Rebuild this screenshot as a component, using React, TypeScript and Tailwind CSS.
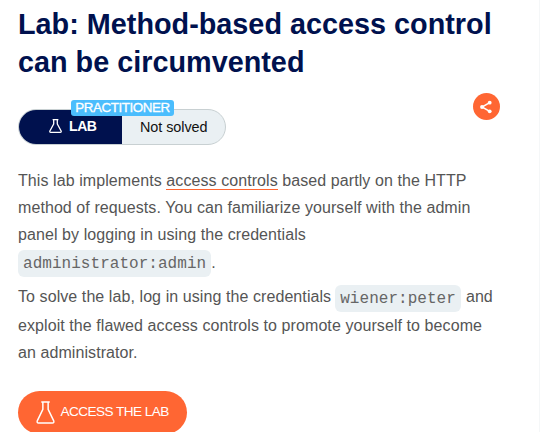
function Flask({ className, stroke }: { className: string; stroke: number }) {
  return (
    <svg
      viewBox="0 0 18 22"
      preserveAspectRatio="none"
      fill="none"
      stroke="currentColor"
      strokeWidth={stroke}
      strokeLinejoin="round"
      className={className}
    >
      <path d="M5 1h8M6.5 1v7L1.2 19q-.6 2 1.2 2h13.2q1.8 0 1.2-2L11.5 8V1" />
    </svg>
  );
}

function Code({ children, className = '' }: { children: string; className?: string }) {
  return (
    <code
      className={`inline-block h-[27px] rounded-[6px] bg-[#eaf0f3] px-[5px] pt-px font-['Liberation_Mono',monospace] text-[16px] leading-[27px] tracking-[0.04px] text-[#666] ${className}`}
    >
      {children}
    </code>
  );
}

export default function App() {
  return (
    <main className="h-[432px] w-[540px] overflow-hidden border-r border-[#f5f7f8] bg-white pl-[18px] font-['Liberation_Sans',Arial,sans-serif] text-[#555]">
      <h1 className="pt-[5px] text-[28.8px] leading-[38px] font-bold whitespace-nowrap text-[#00114e]">
        Lab: Method-based access control
        <br />
        can be circumvented
      </h1>

      <div className="mt-[12px] flex h-[52px] items-start justify-between pr-[39px]">
        <div className="relative mt-[16px] flex h-[36px] w-[208px] rounded-full border border-[#c8d0d2] bg-[#eaf0f3]">
          <div className="flex w-[103px] items-center rounded-l-full bg-[#00114e] pl-[30px] text-[14px] font-bold text-white">
            <Flask className="mb-[2px] h-[14px] w-[13px]" stroke={1.8} />
            <span className="mb-px ml-[7px] tracking-[-0.4px]">LAB</span>
          </div>
          <div className="flex items-center pt-px pl-[18px] text-[14.4px] tracking-[-0.05px] text-[#111]">Not solved</div>
          <div className="absolute top-[-10px] left-[52px] h-[16px] w-[103px] rounded-[3px] bg-[#4bbdfd] text-center text-[13.4px] leading-[15px] tracking-[-0.45px] whitespace-nowrap text-white [-webkit-text-stroke:0.3px_white]">
            PRACTITIONER
          </div>
        </div>
        <button className="flex size-[27px] items-center justify-center rounded-full bg-[#ff6633] pr-px text-white">
          <svg viewBox="0 0 14 14" className="size-[14px]" fill="none" stroke="currentColor" strokeWidth="1.5">
            <path d="M10.7 2.7 3 7l7.7 4.3" />
            <g fill="currentColor" stroke="none">
              <circle cx="10.7" cy="2.7" r="1.9" />
              <circle cx="3" cy="7" r="1.9" />
              <circle cx="10.7" cy="11.3" r="1.9" />
            </g>
          </svg>
        </button>
      </div>

      <p className="mt-[22px] text-[16px] leading-[27px] tracking-[0.08px] whitespace-nowrap">
        This lab implements{' '}
        <a className="inline-block h-[23px] border-b border-[#ff6633] leading-[27px]">access controls</a> based partly on the HTTP
        <br />
        method of requests. You can familiarize yourself with the admin
        <br />
        panel by logging in using the credentials
      </p>
      <p className="mt-[2px] flex h-[27px] text-[16px] leading-[25px]">
        <Code>administrator:admin</Code>.
      </p>
      <p className="mt-[6px] text-[16px] leading-[27px] tracking-[0.08px] whitespace-nowrap">
        <span className="flex h-[29px]">
          <span>To solve the lab, log in using the credentials</span>
          <Code className="mt-[2px] mr-[5px] ml-[4px]">wiener:peter</Code>
          <span>and</span>
        </span>
        exploit the flawed access controls to promote yourself to become
        <br />
        an administrator.
      </p>

      <button className="mt-[25px] flex h-[43px] w-[169px] items-center rounded-full bg-[#ff6633] pl-[18px] text-[13.6px] tracking-[-0.55px] whitespace-nowrap text-white">
        <Flask className="h-[23px] w-[19px]" stroke={1.4} />
        <span className="ml-[5.5px]">ACCESS THE LAB</span>
      </button>
    </main>
  );
}
